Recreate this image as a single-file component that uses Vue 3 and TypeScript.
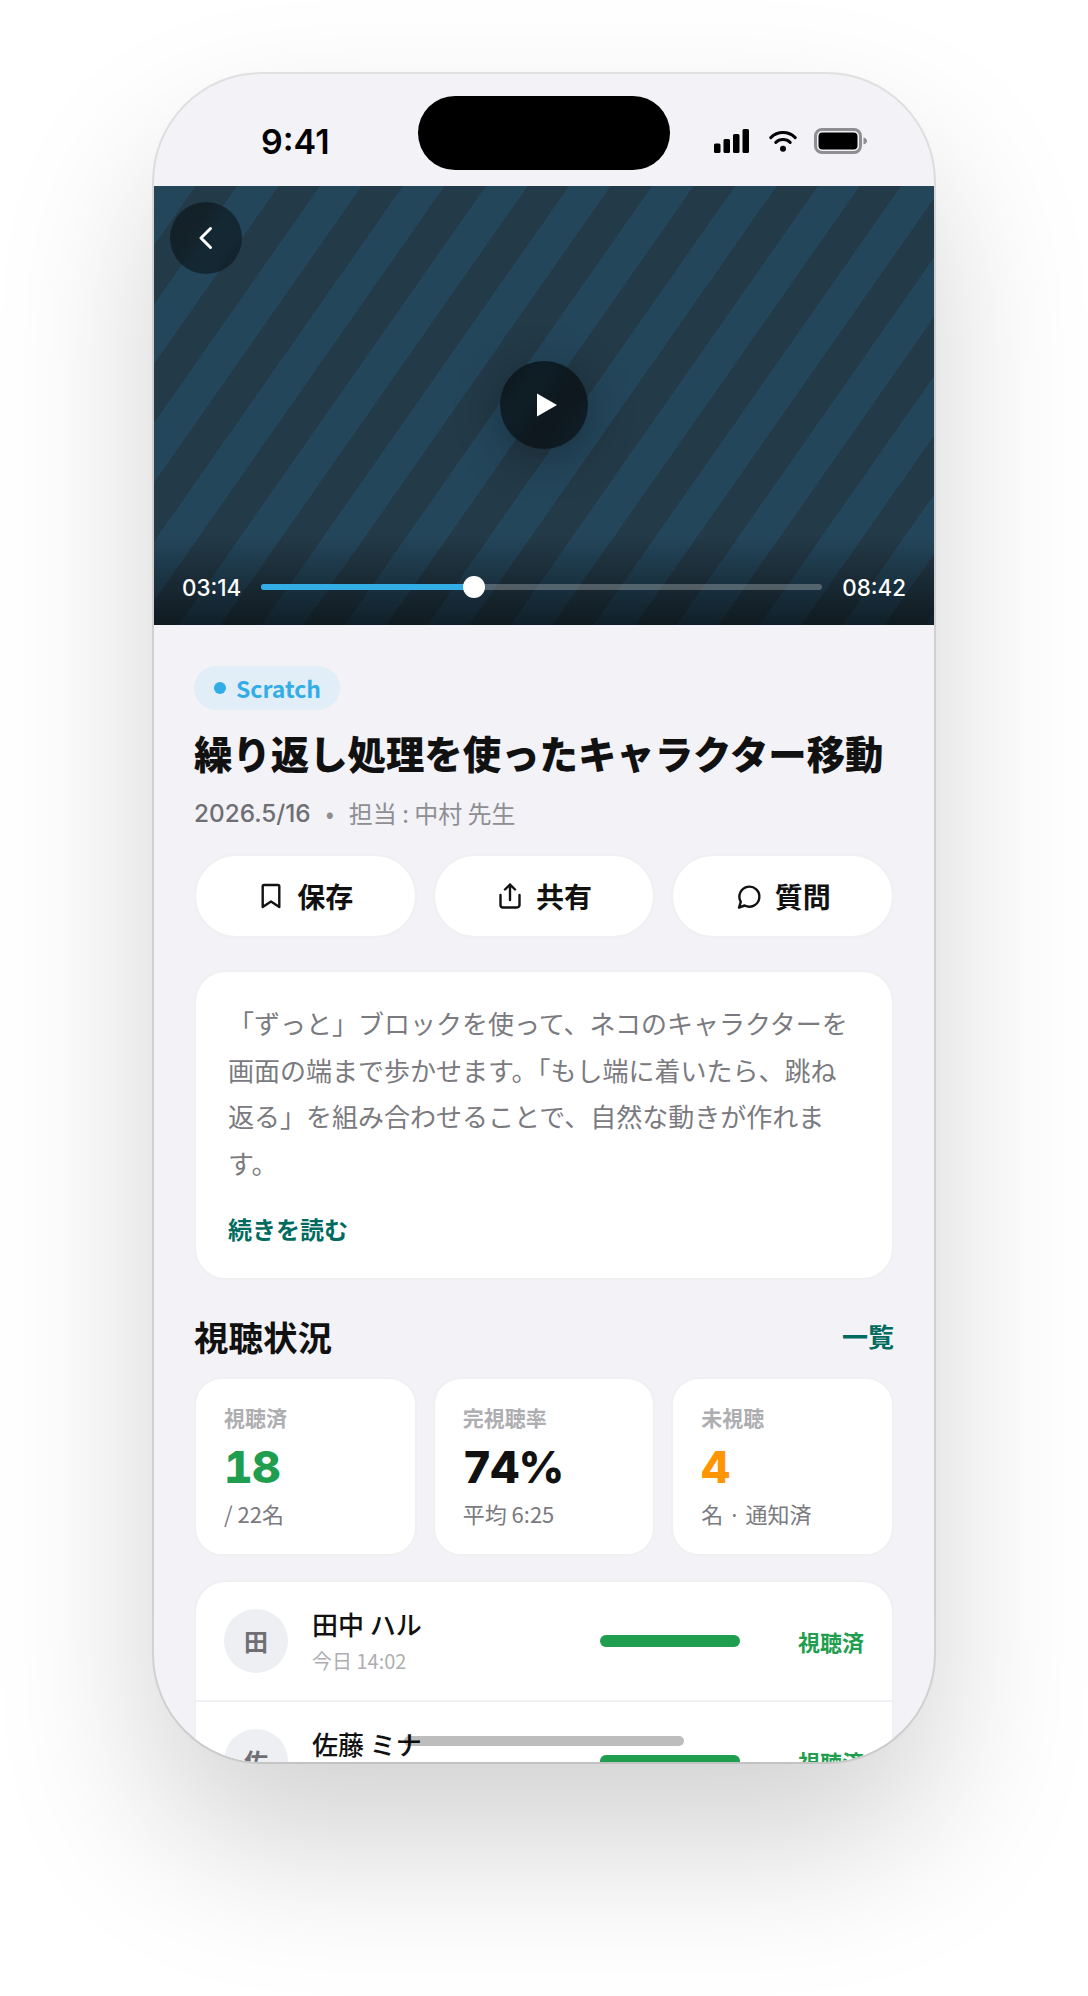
<template>
  <div class="page">
    <div class="phone">
      <div class="island" />
      <div class="status-bar">
        <span class="clock">9:41</span>
        <div class="status-icons">
          <svg width="35" height="24" viewBox="0 0 35 24" fill="#000">
            <rect x="0" y="14.5" width="6.5" height="9.5" rx="1.5" />
            <rect x="9.5" y="10" width="6.5" height="14" rx="1.5" />
            <rect x="19" y="5" width="6.5" height="19" rx="1.5" />
            <rect x="28.5" y="0" width="6.5" height="24" rx="1.5" />
          </svg>
          <svg width="28" height="22" viewBox="0 0 28 22" fill="none" stroke="#000" stroke-width="3" stroke-linecap="round">
            <path d="M1.8 7.6C8.6 .9 19.4 .9 26.2 7.6" />
            <path d="M6.8 12.4c4-3.8 10.400-3.800 14.400 0" />
            <circle cx="14" cy="18.700" r="3" fill="#000" stroke="none" />
          </svg>
          <svg class="battery" width="54" height="26" viewBox="0 0 54 26">
            <rect x="1.500" y="1.500" width="45" height="23" rx="6.500" fill="none" stroke="#8e8e93" stroke-width="3" />
            <rect x="4.500" y="4.500" width="39" height="17" rx="4" fill="#000" />
            <path d="M49.500 9.500c2 .5 3.500 1.800 3.500 3.500s-1.500 3-3.500 3.500z" fill="#8e8e93" />
          </svg>
        </div>
      </div>

      <div class="video">
        <button class="back-btn">
          <svg width="18" height="26" viewBox="0 0 18 26" fill="none" stroke="#fff" stroke-width="3" stroke-linecap="round" stroke-linejoin="round">
            <path d="M13.500 3.500 4 13 13.500 22.500" />
          </svg>
        </button>
        <button class="play-btn">
          <svg width="22" height="24" viewBox="0 0 22 24" fill="#fff">
            <path d="M1 .5 21 12 1 23.500z" />
          </svg>
        </button>
        <div class="player-bar">
          <span class="player-time">03:14</span>
          <div class="track">
            <div class="track-fill" :style="{ width: progress + '%' }">
              <span class="track-thumb" />
            </div>
          </div>
          <span class="player-time">08:42</span>
        </div>
      </div>

      <div class="content">
        <span class="chip"><i class="chip-dot" />Scratch</span>
        <h1 class="title">繰り返し処理を使ったキャラクター移動</h1>
        <div class="meta">
          <span class="meta-date">2026.5/16</span>
          <span class="meta-dot">•</span>
          <span>担当 : 中村 先生</span>
        </div>

        <div class="actions">
          <button class="action-btn">
            <svg width="28" height="28" viewBox="0 0 28 28" fill="none" stroke="#111" stroke-width="2.400" stroke-linejoin="round">
              <path d="M7 3h14a1.300 1.300 0 0 1 1.300 1.300V25L14 19.500 5.700 25V4.300A1.300 1.300 0 0 1 7 3z" />
            </svg>
            保存
          </button>
          <button class="action-btn">
            <svg width="28" height="28" viewBox="0 0 28 28" fill="none" stroke="#111" stroke-width="2.400" stroke-linecap="round" stroke-linejoin="round">
              <path d="M4.500 13v10a2.500 2.500 0 0 0 2.500 2.500h14a2.500 2.500 0 0 0 2.500-2.500V13" />
              <path d="M14 18V2.500M9 7.500l5-5 5 5" />
            </svg>
            共有
          </button>
          <button class="action-btn">
            <svg width="28" height="28" viewBox="0 0 28 28" fill="none" stroke="#111" stroke-width="2.400" stroke-linecap="round" stroke-linejoin="round">
              <path d="M4 25.500l1.800-5.700A10 10 0 1 1 9.700 23.500z" />
            </svg>
            質問
          </button>
        </div>

        <div class="desc-card">
          <p class="desc">「ずっと」ブロックを使って、ネコのキャラクターを画面の端まで歩かせます。「もし端に着いたら、跳ね返る」を組み合わせることで、自然な動きが作れます。</p>
          <a class="more">続きを読む</a>
        </div>

        <div class="section-head">
          <h2 class="section-title">視聴状況</h2>
          <a class="section-link">一覧</a>
        </div>

        <div class="stats">
          <div v-for="s in stats" :key="s.label" class="stat">
            <div class="stat-label">{{ s.label }}</div>
            <div class="stat-value" :class="s.tone">{{ s.value }}</div>
            <div class="stat-sub">{{ s.sub }}</div>
          </div>
        </div>

        <div class="list">
          <div v-for="r in rows" :key="r.name" class="row">
            <div class="avatar">{{ r.name[0] }}</div>
            <div class="row-info">
              <div class="row-name">{{ r.name }}</div>
              <div class="row-time">{{ r.time }}</div>
            </div>
            <div class="row-bar"><div class="row-bar-fill" :style="{ width: r.pct + '%' }" /></div>
            <div class="row-status">{{ r.status }}</div>
          </div>
        </div>
      </div>

      <div class="home-indicator" />
    </div>
  </div>
</template>

<script setup lang="ts">
const progress = 38

const stats = [
  { label: '視聴済', value: '18', sub: '/ 22名', tone: 'green' },
  { label: '完視聴率', value: '74%', sub: '平均 6:25', tone: '' },
  { label: '未視聴', value: '4', sub: '名 · 通知済', tone: 'orange' }
]

const rows = [
  { name: '田中 ハル', time: '今日 14:02', pct: 100, status: '視聴済' },
  { name: '佐藤 ミナ', time: '今日 09:18', pct: 100, status: '視聴済' }
]
</script>

<style>
html,
body {
  margin: 0;
  background: #fff;
}
</style>

<style scoped>
.page {
  height: 1996px;
  padding-top: 74px;
  box-sizing: border-box;
  background: #fff;
  font-family: "Noto Sans CJK JP", sans-serif;
  overflow: hidden;
}

.phone {
  position: relative;
  width: 780px;
  height: 1688px;
  margin: 0 auto;
  border-radius: 108px;
  background: #f2f2f7;
  overflow: hidden;
  box-shadow: 0 0 0 2px rgba(0, 0, 0, 0.1), 0 80px 160px rgba(0, 0, 0, 0.18);
}

.island {
  position: absolute;
  top: 22px;
  left: 264px;
  width: 252px;
  height: 74px;
  border-radius: 37px;
  background: #000;
}

.status-bar {
  display: flex;
  justify-content: space-between;
  align-items: center;
  height: 112px;
  padding: 22px 66px 0 107px;
  box-sizing: border-box;
}

.clock {
  font-family: Inter, sans-serif;
  font-size: 34px;
  font-weight: 600;
  color: #000;
}

.status-icons {
  display: flex;
  align-items: center;
  gap: 20px;
}

.battery {
  margin-left: -3px;
}

.video {
  position: relative;
  aspect-ratio: 16 / 9;
  background: repeating-linear-gradient(125deg, #24465b 0 34px, #233a48 34px 68px);
}

.video::after {
  content: "";
  position: absolute;
  left: 0;
  right: 0;
  bottom: 0;
  height: 90px;
  background: linear-gradient(180deg, rgba(0, 0, 0, 0), rgba(0, 0, 0, 0.55));
}

button {
  border: 0;
  padding: 0;
  font-family: inherit;
}

.back-btn {
  position: absolute;
  top: 16px;
  left: 16px;
  display: flex;
  align-items: center;
  justify-content: center;
  width: 72px;
  height: 72px;
  border-radius: 50%;
  background: rgba(0, 0, 0, 0.42);
  backdrop-filter: blur(8px);
}

.play-btn {
  position: absolute;
  top: 50%;
  left: 50%;
  display: flex;
  align-items: center;
  justify-content: center;
  width: 88px;
  height: 88px;
  padding-left: 5px;
  margin: -44px 0 0 -44px;
  border-radius: 50%;
  background: rgba(0, 0, 0, 0.58);
  backdrop-filter: blur(8px);
  box-shadow: 0 8px 48px rgba(0, 0, 0, 0.3);
}

.player-bar {
  position: absolute;
  left: 28px;
  right: 28px;
  bottom: 24px;
  z-index: 1;
  display: flex;
  align-items: center;
  gap: 20px;
}

.player-time {
  font-family: Inter, sans-serif;
  font-size: 22.4px;
  font-weight: 500;
  color: #fff;
}

.track {
  flex: 1;
  height: 6px;
  border-radius: 3px;
  background: rgba(255, 255, 255, 0.25);
}

.track-fill {
  position: relative;
  height: 100%;
  border-radius: 3px;
  background: #32ade6;
}

.track-thumb {
  position: absolute;
  top: -8px;
  right: -11px;
  width: 22px;
  height: 22px;
  border-radius: 50%;
  background: #fff;
}

.content {
  padding: 41px 40px 0;
}

.chip {
  display: inline-flex;
  align-items: center;
  gap: 10px;
  height: 44px;
  padding: 0 19px 0 20px;
  border-radius: 22px;
  background: #e1eef8;
  color: #32ade6;
  font-size: 23px;
  font-weight: 600;
}

.chip-dot {
  width: 12px;
  height: 12px;
  border-radius: 50%;
  background: #32ade6;
}

.title {
  margin: 15px 0 0;
  font-size: 38.4px;
  font-weight: 800;
  line-height: 54px;
  color: #111;
}

.meta {
  display: flex;
  align-items: center;
  gap: 15px;
  margin-top: 15px;
  height: 38px;
  font-size: 24px;
  color: #8e8e93;
}

.meta-date {
  font-family: Inter, sans-serif;
  font-size: 24.3px;
  font-weight: 500;
  color: #6e6e73;
}

.actions,
.stats {
  display: grid;
  grid-template-columns: repeat(3, 1fr);
  gap: 16px;
}

.actions {
  margin-top: 22px;
}

.action-btn {
  display: flex;
  align-items: center;
  justify-content: center;
  gap: 12px;
  height: 84px;
  border: 2px solid #f0f0f3;
  border-radius: 42px;
  background: #fff;
  color: #111;
  font-size: 28px;
  font-weight: 700;
}

.desc-card {
  margin-top: 32px;
  padding: 28px 32px 32px;
  border: 2px solid #f0f0f3;
  border-radius: 32px;
  background: #fff;
}

.desc {
  margin: 0;
  font-size: 26px;
  line-height: 46.800px;
  color: #7a7a7f;
}

.more {
  display: block;
  margin-top: 24px;
  font-size: 24px;
  font-weight: 600;
  color: #006b5e;
}

.section-head {
  display: flex;
  justify-content: space-between;
  align-items: center;
  margin-top: 32px;
}

.section-title {
  margin: 0;
  font-size: 34.5px;
  font-weight: 700;
  line-height: 48px;
  color: #111;
}

.section-link {
  font-size: 26px;
  font-weight: 600;
  color: #006b5e;
}

.stats {
  margin-top: 17px;
}

.stat {
  height: 179px;
  padding: 23px 28px 0;
  box-sizing: border-box;
  border: 2px solid #f0f0f3;
  border-radius: 28px;
  background: #fff;
}

.stat-label {
  font-size: 21px;
  font-weight: 600;
  line-height: 30px;
  color: #aeaeb2;
}

.stat-value {
  margin-top: 8px;
  font-family: Inter, sans-serif;
  font-size: 44.5px;
  font-weight: 800;
  line-height: 54px;
  letter-spacing: -0.8px;
  font-variant-numeric: tabular-nums;
  color: #111;
}

.stat-value.green {
  color: #1f9e4f;
}

.stat-value.orange {
  color: #ff9500;
}

.stat-sub {
  margin-top: 3px;
  font-size: 22px;
  line-height: 32px;
  color: #7a7a7f;
}

.list {
  margin-top: 24px;
  border: 2px solid #f0f0f3;
  border-radius: 32px;
  background: #fff;
}

.row {
  display: flex;
  align-items: center;
  height: 118px;
  padding: 0 28px;
  border-bottom: 2px solid #f0f0f3;
}

.avatar {
  display: flex;
  align-items: center;
  justify-content: center;
  width: 64px;
  height: 64px;
  border-radius: 50%;
  background: #eeeff3;
  color: #6e6e73;
  font-size: 24px;
  font-weight: 700;
}

.row-info {
  flex: 1;
  margin-left: 24px;
}

.row-name {
  font-size: 26px;
  font-weight: 500;
  line-height: 38px;
  color: #111;
}

.row-time {
  margin-top: 2px;
  font-size: 20px;
  line-height: 32px;
  color: #aeaeb2;
}

.row-bar {
  width: 140px;
  height: 12px;
  border-radius: 6px;
  background: #eeeff3;
}

.row-bar-fill {
  height: 100%;
  border-radius: 6px;
  background: #1f9e4f;
}

.row-status {
  width: 124px;
  text-align: right;
  font-size: 22px;
  font-weight: 600;
  color: #1f9e4f;
}

.home-indicator {
  position: absolute;
  left: 250px;
  bottom: 16px;
  width: 280px;
  height: 10px;
  border-radius: 5px;
  background: rgba(0, 0, 0, 0.26);
}
</style>
